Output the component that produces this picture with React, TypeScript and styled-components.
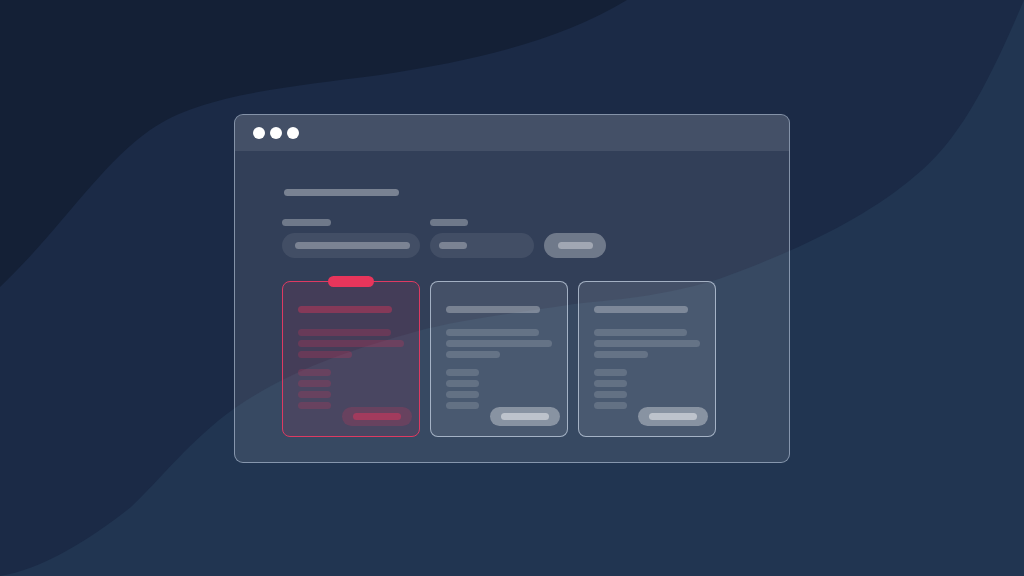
import styled, { createGlobalStyle, css } from "styled-components";

const GlobalStyle = createGlobalStyle`
  html, body {
    margin: 0;
    padding: 0;
    background: #1b2a46;
    font-family: "Inter", "Liberation Sans", sans-serif;
  }
`;

const PINK = "232, 52, 90";

export default function App() {
  return (
    <>
      <GlobalStyle />
      <Page>
        <Backdrop />
        <Window>
          <TitleBar>
            <Dot />
            <Dot />
            <Dot />
          </TitleBar>
          <Body>
            <Heading />
            <FormRow>
              <Field>
                <Label $width={49} />
                <Input>
                  <Placeholder $width={115} $pad={13} />
                </Input>
              </Field>
              <Field>
                <Label $width={38} />
                <Input>
                  <Placeholder $width={28} $pad={9} />
                </Input>
              </Field>
              <SubmitButton>
                <ButtonText />
              </SubmitButton>
            </FormRow>
            <Cards>
              <Plan accent />
              <Plan />
              <Plan />
            </Cards>
          </Body>
        </Window>
      </Page>
    </>
  );
}

function Backdrop() {
  return (
    <Waves viewBox="0 0 1024 576" preserveAspectRatio="none">
      <rect width="1024" height="576" fill="#1b2a46" />
      <path
        d="M0 0 L627 0 C560 40 480 60 380 75 C280 88 200 95 150 130 C100 165 60 230 0 287 Z"
        fill="#142036"
      />
      <path
        d="M1024 0 C990 80 960 140 915 176 C870 215 800 250 719 279 C650 300 600 300 568 305 C500 315 460 320 418 331 C350 350 290 370 235 408 C190 440 160 480 131 507 C90 540 40 570 0 576 L1024 576 Z"
        fill="#213551"
      />
    </Waves>
  );
}

function Plan({ accent = false }: { accent?: boolean }) {
  return (
    <Card $accent={accent}>
      {accent && <Badge />}
      <CardTitle $accent={accent} />
      <Lines>
        <Line $accent={accent} $width={93} />
        <Line $accent={accent} $width={106} />
        <Line $accent={accent} $width={54} />
      </Lines>
      <CardFooter>
        <Features>
          <Feature $accent={accent} />
          <Feature $accent={accent} />
          <Feature $accent={accent} />
          <Feature $accent={accent} />
        </Features>
        <CardButton $accent={accent}>
          <CardButtonText $accent={accent} />
        </CardButton>
      </CardFooter>
    </Card>
  );
}

const Page = styled.div`
  position: relative;
  height: 100vh;
  display: flex;
  align-items: center;
  justify-content: center;
  overflow: hidden;
`;

const Waves = styled.svg`
  position: absolute;
  inset: 0;
  width: 100%;
  height: 100%;
`;

const Window = styled.div`
  position: relative;
  width: 554px;
  border: 1px solid rgba(200, 215, 235, 0.55);
  border-radius: 9px;
  background: rgba(255, 255, 255, 0.1);
  overflow: hidden;
`;

const TitleBar = styled.div`
  height: 36px;
  display: flex;
  align-items: center;
  gap: 5px;
  padding-left: 18px;
  background: rgba(255, 255, 255, 0.09);
`;

const Dot = styled.span`
  width: 12px;
  height: 12px;
  border-radius: 50%;
  background: #ffffff;
`;

const Body = styled.div`
  padding: 38px 47px 25px;
`;

const bar = css`
  height: 7px;
  border-radius: 4px;
`;

const Heading = styled.div`
  ${bar};
  width: 115px;
  margin-left: 2px;
  background: rgba(255, 255, 255, 0.35);
`;

const FormRow = styled.div`
  margin-top: 23px;
  display: grid;
  grid-template-columns: 138px 104px 62px;
  column-gap: 10px;
  align-items: end;
`;

const Field = styled.div`
  display: flex;
  flex-direction: column;
  gap: 7px;
`;

const Label = styled.div<{ $width: number }>`
  ${bar};
  width: ${(p) => p.$width}px;
  background: rgba(255, 255, 255, 0.3);
`;

const Input = styled.div`
  height: 25px;
  border-radius: 13px;
  display: flex;
  align-items: center;
  background: rgba(255, 255, 255, 0.08);
`;

const Placeholder = styled.div<{ $width: number; $pad: number }>`
  ${bar};
  width: ${(p) => p.$width}px;
  margin-left: ${(p) => p.$pad}px;
  background: rgba(255, 255, 255, 0.3);
`;

const SubmitButton = styled.div`
  height: 25px;
  border-radius: 13px;
  display: flex;
  align-items: center;
  justify-content: center;
  background: rgba(255, 255, 255, 0.3);
`;

const ButtonText = styled.div`
  ${bar};
  width: 35px;
  background: rgba(255, 255, 255, 0.35);
`;

const Cards = styled.div`
  margin-top: 23px;
  display: grid;
  grid-template-columns: repeat(3, 138px);
  column-gap: 10px;
`;

const Card = styled.div<{ $accent: boolean }>`
  position: relative;
  box-sizing: border-box;
  height: 156px;
  padding: 24px 7px 10px 15px;
  border-radius: 8px;
  border: 1px solid
    ${(p) => (p.$accent ? "#de3a62" : "rgba(205, 218, 235, 0.7)")};
  background: ${(p) =>
    p.$accent ? `rgba(${PINK}, 0.1)` : "rgba(255, 255, 255, 0.09)"};
`;

const Badge = styled.div`
  position: absolute;
  top: -6px;
  left: 50%;
  transform: translateX(-50%);
  width: 46px;
  height: 11px;
  border-radius: 6px;
  background: #e8355b;
`;

const tone = (accent: boolean, alpha: number) =>
  accent ? `rgba(${PINK}, ${alpha})` : `rgba(255, 255, 255, ${alpha * 0.72})`;

const CardTitle = styled.div<{ $accent: boolean }>`
  ${bar};
  width: 94px;
  background: ${(p) => tone(p.$accent, 0.4)};
`;

const Lines = styled.div`
  margin-top: 16px;
  display: flex;
  flex-direction: column;
  gap: 4px;
`;

const Line = styled.div<{ $accent: boolean; $width: number }>`
  ${bar};
  width: ${(p) => p.$width}px;
  background: ${(p) => tone(p.$accent, 0.22)};
`;

const CardFooter = styled.div`
  margin-top: 11px;
  display: flex;
  justify-content: space-between;
  align-items: flex-start;
`;

const Features = styled.div`
  display: flex;
  flex-direction: column;
  gap: 4px;
`;

const Feature = styled.div<{ $accent: boolean }>`
  ${bar};
  width: 33px;
  background: ${(p) => tone(p.$accent, 0.2)};
`;

const CardButton = styled.div<{ $accent: boolean }>`
  margin-top: 38px;
  width: 70px;
  height: 19px;
  border-radius: 10px;
  display: flex;
  align-items: center;
  justify-content: center;
  background: ${(p) =>
    p.$accent ? `rgba(${PINK}, 0.2)` : "rgba(255, 255, 255, 0.35)"};
`;

const CardButtonText = styled.div<{ $accent: boolean }>`
  ${bar};
  width: 48px;
  background: ${(p) =>
    p.$accent ? `rgba(${PINK}, 0.45)` : "rgba(255, 255, 255, 0.45)"};
`;
